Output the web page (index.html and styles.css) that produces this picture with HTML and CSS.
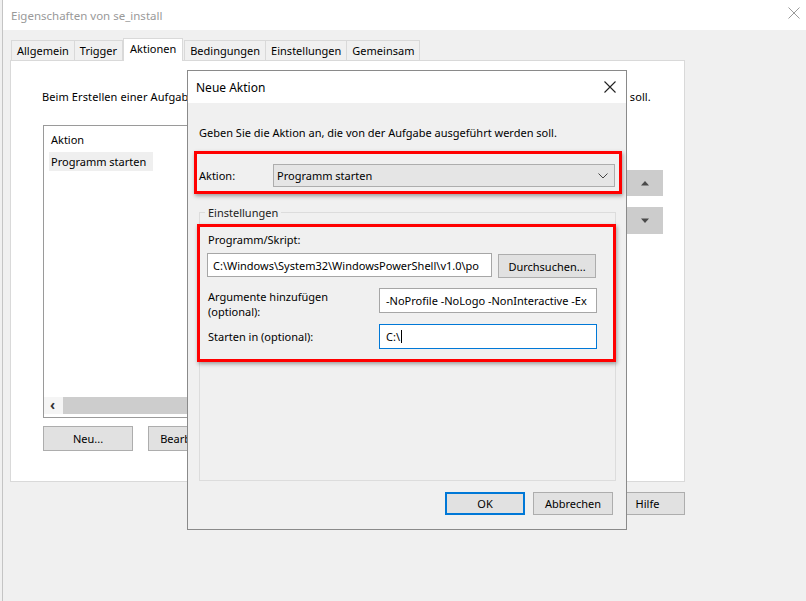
FILE: index.html
```html
<!DOCTYPE html>
<html>
<head>
<meta name="viewport" content="width=device-width, initial-scale=1">
<title>Eigenschaften von se_install</title>
<link rel="stylesheet" href="styles.css">
</head>
<body>

<div class="window">
  <div class="titlebar">
    <span class="title">Eigenschaften von se_install</span>
    <svg class="win-close" width="12" height="12" viewBox="0 0 12 12"><path d="M0.5 0.5 L11.5 11.5 M11.5 0.5 L0.5 11.5" stroke="#9a9a9a" stroke-width="1"/></svg>
  </div>

  <div class="tabs">
    <span class="tab">Allgemein</span>
    <span class="tab">Trigger</span>
    <span class="tab active">Aktionen</span>
    <span class="tab">Bedingungen</span>
    <span class="tab">Einstellungen</span>
    <span class="tab">Gemeinsam</span>
  </div>

  <div class="panel">
    <p class="intro">Beim Erstellen einer Aufgabe müssen Sie die Aktion angeben, die beim Starten der Aufgabe ausgeführt werden soll.</p>
    <div class="list-row">
      <div class="listbox">
        <div class="list-head">Aktion</div>
        <div class="list-item">Programm starten</div>
        <div class="hscroll">
          <span class="scroll-arrow">&lsaquo;</span>
          <span class="scroll-thumb"></span>
        </div>
      </div>
      <div class="move-btns">
        <div class="move up"><svg width="10" height="6" viewBox="0 0 10 6"><polygon points="1,5.5 9,5.5 5,1" fill="#4a4a4a"/></svg></div>
        <div class="move down"><svg width="10" height="6" viewBox="0 0 10 6"><polygon points="1,0.5 9,0.5 5,5" fill="#4a4a4a"/></svg></div>
      </div>
    </div>
    <div class="panel-btns">
      <div class="btn wide">Neu...</div>
      <div class="btn wide">Bearbeiten...</div>
      <div class="btn wide">Löschen</div>
    </div>
  </div>

  <div class="footer">
    <div class="btn hilfe">Hilfe</div>
  </div>
</div>

<!-- modal dialog on top of the properties window -->
<div class="dialog">
  <div class="dlg-title">
    <span>Neue Aktion</span>
    <svg class="dlg-close" width="12" height="12" viewBox="0 0 12 12"><path d="M0.5 0.5 L11.5 11.5 M11.5 0.5 L0.5 11.5" stroke="#222" stroke-width="1.1"/></svg>
  </div>
  <div class="dlg-body">
    <p class="dlg-intro">Geben Sie die Aktion an, die von der Aufgabe ausgeführt werden soll.</p>

    <div class="mark action-row">
      <span class="action-label">Aktion:</span>
      <div class="combo">
        <span>Programm starten</span>
        <svg width="10" height="6" viewBox="0 0 10 6"><polyline points="0.5,0.5 5,5 9.5,0.5" fill="none" stroke="#444" stroke-width="1"/></svg>
      </div>
    </div>

    <fieldset class="group">
      <legend>Einstellungen</legend>
      <div class="mark settings">
        <div class="field-label">Programm/Skript:</div>
        <div class="path-row">
          <div class="textbox path">C:\Windows\System32\WindowsPowerShell\v1.0\po</div>
          <div class="btn browse">Durchsuchen...</div>
        </div>
        <div class="arg-row">
          <div class="row-label">Argumente hinzufügen<br>(optional):</div>
          <div class="textbox args">-NoProfile -NoLogo -NonInteractive -Ex</div>
        </div>
        <div class="start-row">
          <div class="row-label">Starten in (optional):</div>
          <div class="textbox focus">C:\<span class="caret"></span></div>
        </div>
      </div>
    </fieldset>

    <div class="dlg-btns">
      <div class="btn default">OK</div>
      <div class="btn">Abbrechen</div>
    </div>
  </div>
</div>

</body>
</html>
```

FILE: styles.css
```css
* {box-sizing: border-box;}

body {
  margin: 0;
  background-color: #f0f0f0;
  font-family: "Noto Sans", "Open Sans", sans-serif;
  font-size: 11px;
  line-height: 15px;
  color: #000;
  width: 806px;
  height: 601px;
  overflow: hidden;
  position: relative;
}

p {margin: 0;}

.window {
  margin-left: 2px;
  height: 601px;
  border-left: 1px solid #c4c4c4;
}

.titlebar {
  height: 30px;
  background-color: #fff;
  display: flex;
  align-items: center;
  justify-content: space-between;
  padding-left: 8px;
  padding-right: 6px;
}

.title {
  color: #999;
  font-size: 11.5px;
}

.win-close {
  margin-top: -4px;
}

/* tab strip */
.tabs {
  display: flex;
  align-items: flex-end;
  height: 22px;
  margin-top: 8px;
  margin-left: 8px;
}

.tab {
  height: 20px;
  padding: 2px 5px 0 5px;
  border: 1px solid #d9d9d9;
  border-bottom: none;
  margin-right: -1px;
  background-color: #f0f0f0;
}

.tab.active {
  height: 23px;
  margin-bottom: -1px;
  padding: 2px 6px 0 6px;
  background-color: #fff;
  position: relative;
  z-index: 2;
  margin-left: 1px;
  margin-right: 1px;
}

/* tab page */
.panel {
  margin-left: 7px;
  width: 675px;
  height: 422px;
  background-color: #fff;
  border: 1px solid #d9d9d9;
  padding: 28px 21px 0 32px;
  position: relative;
}

.intro {
  white-space: nowrap;
  margin-left: -1px;
  letter-spacing: 0.1px;
}

.list-row {
  display: flex;
  margin-top: 21px;
}

.listbox {
  width: 576px;
  height: 293px;
  border: 1px solid #9a9a9a;
  position: relative;
  padding-top: 6px;
}

.list-head {
  padding-left: 7px;
}

.list-item {
  margin: 5px 0 0 5px;
  width: 104px;
  height: 19px;
  padding: 2px 0 0 2px;
  background-color: #efefef;
}

.hscroll {
  position: absolute;
  left: 0;
  right: 0;
  bottom: 3px;
  height: 17px;
  display: flex;
  background-color: #f0f0f0;
}

.scroll-arrow {
  width: 19px;
  background-color: #f5f5f5;
  font-weight: bold;
  font-size: 14px;
  line-height: 15px;
  padding-left: 6px;
  color: #333;
}

.scroll-thumb {
  flex: 1;
  background-color: #cdcdcd;
}

.move-btns {
  margin-left: 8px;
  padding-top: 45px;
  display: flex;
  flex-direction: column;
  gap: 11px;
}

.move {
  width: 36px;
  height: 26px;
  background-color: #cccccc;
  display: flex;
  align-items: center;
  justify-content: center;
}

.move.down {
  height: 27px;
}

.panel-btns {
  display: flex;
  gap: 15px;
  margin-top: 8px;
}

/* push buttons */
.btn {
  height: 23px;
  background-color: #e1e1e1;
  border: 1px solid #adadad;
  display: flex;
  align-items: center;
  justify-content: center;
  width: 80px;
}

.btn.wide {
  width: 90px;
  height: 25px;
}

.btn.default {
  border-color: #0078d7;
  box-shadow: inset 0 0 0 1px #0078d7;
}

.footer {
  width: 682px;
  display: flex;
  justify-content: flex-end;
  margin-top: 10px;
}

.btn.hilfe {
  width: 75px;
}

/* Neue Aktion dialog */
.dialog {
  position: absolute;
  left: 187px;
  top: 70px;
  width: 440px;
  height: 460px;
  border: 1px solid #8a8a8a;
  background-color: #f0f0f0;
  z-index: 5;
}

.dlg-title {
  height: 32px;
  background-color: #fff;
  display: flex;
  align-items: center;
  justify-content: space-between;
  padding: 0 10px 0 8px;
  font-size: 12px;
}

.dlg-body {
  padding: 22px 13px 0 6px;
}

.dlg-intro {
  padding-left: 5px;
}

/* red annotation frames */
.mark {
  border: 3px solid #ff0000;
  box-shadow: 1px 2px 4px rgba(0, 0, 0, 0.35);
}

.action-row {
  margin-top: 11px;
  width: 428px;
  height: 43px;
  display: flex;
  align-items: center;
  padding: 6px 0 0 2px;
}

.action-label {
  width: 74px;
}

.combo {
  width: 342px;
  height: 23px;
  background-color: #e5e5e5;
  border: 1px solid #adadad;
  display: flex;
  align-items: center;
  justify-content: space-between;
  padding: 0 6px 0 3px;
}

.group {
  margin: 11px 0 0 5px;
  width: 417px;
  padding: 4px 0 118px 0;
  border: 1px solid #dcdcdc;
  min-width: 0;
}

.group legend {
  margin-left: 5px;
  padding: 0 3px 0 3px;
  color: #222;
}

.settings {
  margin-left: -3px;
  width: 419px;
  padding: 5px 16px 10px 7px;
}

.field-label {
  padding-left: 1px;
}

.path-row {
  display: flex;
  align-items: flex-start;
  gap: 6px;
  margin-top: 6px;
}

.textbox {
  height: 25px;
  background-color: #fff;
  border: 1px solid #a6a6a6;
  white-space: nowrap;
  overflow: hidden;
  padding: 4px 6px 0 6px;
}

.textbox.path {
  width: 285px;
  height: 24px;
  padding-left: 5px;
}

.btn.browse {
  width: 98px;
  height: 24px;
  margin-top: 1px;
}

.arg-row {
  display: flex;
  margin-top: 10px;
  height: 30px;
}

.row-label {
  width: 172px;
  padding-left: 1px;
}

.arg-row .row-label {
  margin-top: 1px;
}

.textbox.args {
  width: 218px;
}

.start-row {
  display: flex;
  align-items: center;
  margin-top: 6px;
}

.textbox.focus {
  width: 218px;
  border-color: #0078d7;
}

.caret {
  display: inline-block;
  width: 1px;
  height: 13px;
  background-color: #000;
  vertical-align: -2px;
  margin-left: 1px;
}

.dlg-btns {
  display: flex;
  justify-content: flex-end;
  gap: 8px;
  margin-top: 11px;
}
```
